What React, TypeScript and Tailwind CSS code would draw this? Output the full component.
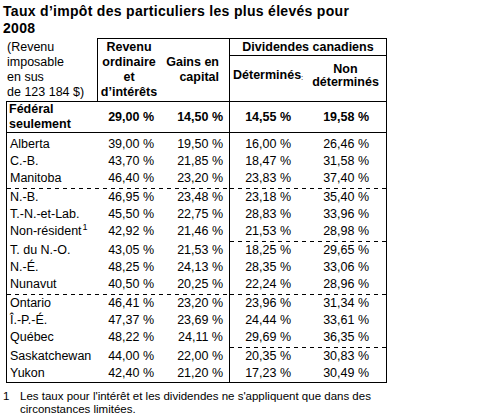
import React from "react";

type Row = { name: React.ReactNode; v: [string, string, string, string] };

const rows: Row[] = [
  { name: "Alberta", v: ["39,00 %", "19,50 %", "16,00 %", "26,46 %"] },
  { name: "C.-B.", v: ["43,70 %", "21,85 %", "18,47 %", "31,58 %"] },
  { name: "Manitoba", v: ["46,40 %", "23,20 %", "23,83 %", "37,40 %"] },
  { name: "N.-B.", v: ["46,95 %", "23,48 %", "23,18 %", "35,40 %"] },
  { name: "T.-N.-et-Lab.", v: ["45,50 %", "22,75 %", "28,83 %", "33,96 %"] },
  {
    name: (
      <>
        Non-résident<sup className="text-[9px] ml-[1px]">1</sup>
      </>
    ),
    v: ["42,92 %", "21,46 %", "21,53 %", "28,98 %"],
  },
  { name: "T. du N.-O.", v: ["43,05 %", "21,53 %", "18,25 %", "29,65 %"] },
  { name: "N.-É.", v: ["48,25 %", "24,13 %", "28,35 %", "33,06 %"] },
  { name: "Nunavut", v: ["40,50 %", "20,25 %", "22,24 %", "28,96 %"] },
  { name: "Ontario", v: ["46,41 %", "23,20 %", "23,96 %", "31,34 %"] },
  { name: "Î.-P.-É.", v: ["47,37 %", "23,69 %", "24,44 %", "33,61 %"] },
  { name: "Québec", v: ["48,22 %", "24,11 %", "29,69 %", "36,35 %"] },
  { name: "Saskatchewan", v: ["44,00 %", "22,00 %", "20,35 %", "30,83 %"] },
  { name: "Yukon", v: ["42,40 %", "21,20 %", "17,23 %", "30,49 %"] },
];

const dash =
  "h-px bg-[image:repeating-linear-gradient(to_right,#000_0px,#000_4px,transparent_4px,transparent_8px)]";

function Sep({ full }: { full?: boolean }) {
  return (
    <div className="flex h-[2px]">
      <div className="w-[223px] border-r border-black flex flex-col justify-end">
        {full ? <div className={dash} /> : null}
      </div>
      <div className="flex-1 flex flex-col justify-end">
        <div className={dash} />
      </div>
    </div>
  );
}

function DataRow({ r, first }: { r: Row; first?: boolean }) {
  const pad = first ? "pt-[3px]" : "";
  return (
    <div className={"flex " + (first ? "h-[20px]" : "h-[17px]")}>
      <div className={"w-[90px] pl-[3px] whitespace-nowrap flex items-center " + pad}>{r.name}</div>
      <div className={"w-[63px] pr-[6px] flex items-center justify-end " + pad}>{r.v[0]}</div>
      <div className={"w-[70px] pr-[6px] border-r border-black flex items-center justify-end " + pad}>
        {r.v[1]}
      </div>
      <div className={"w-[75px] pr-[14px] flex items-center justify-end " + pad}>{r.v[2]}</div>
      <div className={"w-[81px] pr-[17px] flex items-center justify-end " + pad}>{r.v[3]}</div>
    </div>
  );
}

export default function App() {
  return (
    <div className="w-[485px] h-[418px] bg-white text-black font-['Liberation_Sans',Arial,sans-serif] text-[12.5px] leading-[15px]">
      <h1 className="pl-[3px] pt-[3px] h-[38px] text-[14px] font-bold leading-[17px] tracking-[0.3px]">
        Taux d’impôt des particuliers les plus élevés pour
        <br />
        2008
      </h1>

      <div className="ml-[6px] w-[381px]">
        {/* header */}
        <div className="flex h-[63px]">
          <div className="w-[91px] pl-[1px] pt-[2px] leading-[15px]">
            (Revenu
            <br />
            imposable
            <br />
            en sus
            <br />
            de 123 184 $)
          </div>
          <div className="flex flex-1 border-t border-l border-r border-black font-bold">
            <div className="w-[62px] pt-[1px] text-center leading-[15px]">
              Revenu
              <br />
              ordinaire
              <br />
              et
              <br />
              d’intérêts
            </div>
            <div className="w-[70px] pr-[10px] border-r border-black flex items-center justify-end text-right leading-[15px]">
              <div>
                Gains en
                <br />
                capital
              </div>
            </div>
            <div className="flex-1 flex flex-col">
              <div className="h-[17px] border-b border-black text-center leading-[16px]">
                Dividendes canadiens
              </div>
              <div className="flex flex-1 pb-[6px]">
                <div className="w-[75px] pl-[3px] flex items-center whitespace-nowrap">
                  Déterminés<span className="text-[8px] font-normal relative top-[2px]">:</span>
                </div>
                <div className="flex-1 flex items-center justify-center text-center leading-[13px]">
                  <div>
                    Non
                    <br />
                    déterminés
                  </div>
                </div>
              </div>
            </div>
          </div>
        </div>

        {/* body */}
        <div className="border border-black">
          <div className="flex items-center h-[31px] border-b border-black font-bold">
            <div className="w-[90px] pl-[2px] leading-[15px]">
              Fédéral
              <br />
              seulement
            </div>
            <div className="w-[63px] pr-[6px] text-right">29,00 %</div>
            <div className="w-[70px] pr-[6px] border-r border-black self-stretch flex items-center justify-end">
              14,50 %
            </div>
            <div className="w-[75px] pr-[14px] text-right">14,55 %</div>
            <div className="w-[81px] pr-[17px] text-right">19,58 %</div>
          </div>

          <DataRow r={rows[0]} first />
          <DataRow r={rows[1]} />
          <DataRow r={rows[2]} />
          <Sep full />
          <DataRow r={rows[3]} />
          <DataRow r={rows[4]} />
          <DataRow r={rows[5]} />
          <Sep />
          <DataRow r={rows[6]} />
          <DataRow r={rows[7]} />
          <DataRow r={rows[8]} />
          <Sep full />
          <DataRow r={rows[9]} />
          <DataRow r={rows[10]} />
          <DataRow r={rows[11]} />
          <Sep />
          <DataRow r={rows[12]} />
          <DataRow r={rows[13]} />
        </div>
      </div>

      <div className="flex pt-[7px] text-[11.5px] leading-[13px]">
        <div className="w-[20px] pl-[3px]">1</div>
        <div>
          Les taux pour l'intérêt et les dividendes ne s'appliquent que dans des
          <br />
          circonstances limitées.
        </div>
      </div>
    </div>
  );
}
